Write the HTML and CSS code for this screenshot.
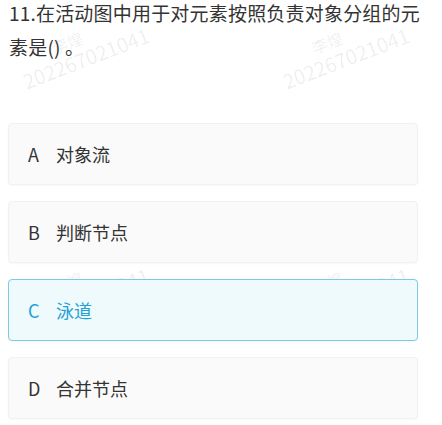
FILE: index.html
```html
<!DOCTYPE html>
<html lang="zh">
<head>
<meta charset="utf-8">
<link rel="stylesheet" href="styles.css">
</head>
<body>
<div class="page">
  <div class="wm wm1"><span class="wm-name">李煌</span><span class="wm-id">202267021041</span></div>
  <div class="wm wm2"><span class="wm-name">李煌</span><span class="wm-id">202267021041</span></div>
  <div class="wm wm3"><span class="wm-name">李煌</span><span class="wm-id">202267021041</span></div>
  <div class="wm wm4"><span class="wm-name">李煌</span><span class="wm-id">202267021041</span></div>
  <div class="question">11.在活动图中用于对元素按照负责对象分组的元素是() 。</div>
  <div class="options">
    <div class="option"><span class="key">A</span><span class="text">对象流</span></div>
    <div class="option"><span class="key">B</span><span class="text">判断节点</span></div>
    <div class="option selected"><span class="key">C</span><span class="text">泳道</span></div>
    <div class="option"><span class="key">D</span><span class="text">合并节点</span></div>
  </div>
</div>
</body>
</html>
```

FILE: styles.css
```css
html, body {
  margin: 0;
  padding: 0;
  background: #ffffff;
}
body {
  font-family: "Noto Sans CJK SC", "Noto Sans", sans-serif;
  color: #333333;
}
.page {
  position: relative;
  width: 442px;
  height: 425px;
  overflow: hidden;
  padding: 0 24px 0 8px;
  box-sizing: border-box;
}
.question {
  position: relative;
  font-size: 19px;
  letter-spacing: 0.2px;
  line-height: 34px;
  margin: -4px -16px 0 0;
  padding-left: 1px;
  color: #333333;
}
.options {
  position: relative;
  z-index: 1;
  margin-top: 59px;
  display: flex;
  flex-direction: column;
  gap: 16px;
}
.option {
  height: 62px;
  box-sizing: border-box;
  display: flex;
  align-items: center;
  padding-left: 19px;
  background: #fafafa;
  border: 1px solid #f1f1f1;
  border-radius: 4px;
  box-shadow: 0 1px 2px rgba(0, 0, 0, 0.03);
  font-size: 18px;
  color: #333333;
}
.key {
  width: 28px;
}
.option.selected {
  background: #effafd;
  border-color: #7ccbe4;
  color: #1fa0d8;
}
.wm {
  position: absolute;
  display: flex;
  flex-direction: column;
  align-items: center;
  color: rgba(0, 0, 0, 0.075);
  transform: rotate(-21deg);
  pointer-events: none;
  line-height: 1.2;
}
.wm-name {
  font-size: 16px;
  margin-left: -24px;
}
.wm-id {
  font-size: 20px;
}
.wm1 { left: 16px; top: 28px; }
.wm2 { left: 276px; top: 28px; }
.wm3 { left: 16px; top: 268px; }
.wm4 { left: 276px; top: 268px; }
```
